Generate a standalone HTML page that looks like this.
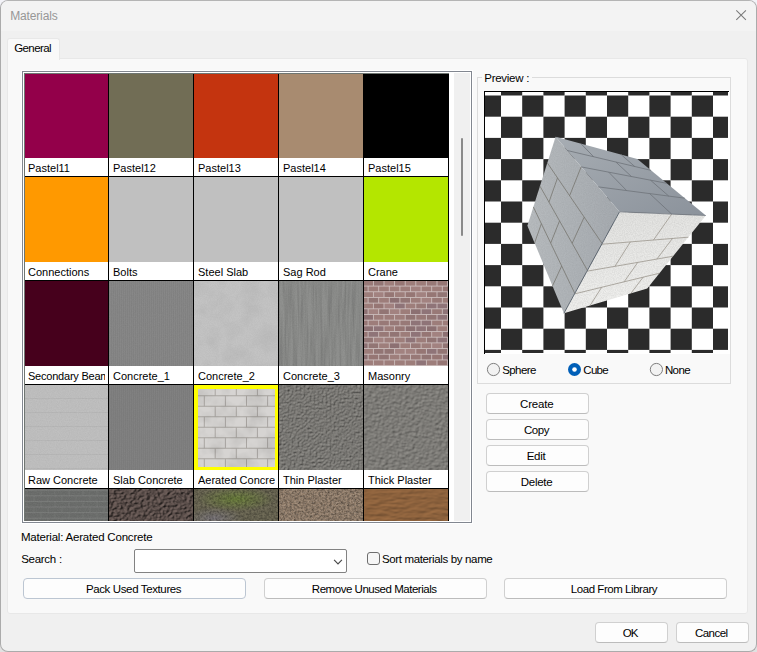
<!DOCTYPE html><html><head><meta charset="utf-8"><title>Materials</title><style>
*{box-sizing:border-box;margin:0;padding:0}
html,body{width:757px;height:652px;overflow:hidden;background:linear-gradient(180deg,#f3f3f8 0,#f3f3f8 50%,#e1e1e1 50%,#e1e1e1 100%);font-family:"Liberation Sans",sans-serif;}
#win{position:absolute;left:0;top:0;width:757px;height:652px;background:#f0f0f0;border:1px solid #ababab;border-top-color:#b4b4b4;border-radius:8px;overflow:hidden}
#root{position:absolute;left:-1px;top:-1px;width:757px;height:652px}
.a{position:absolute}
.t{position:absolute;white-space:nowrap;line-height:1;}
.btn{position:absolute;background:#fdfdfd;border:1px solid #d0d0d0;border-bottom-color:#bcbcbc;border-radius:4px}
.cell{position:absolute;width:84px;height:85px;overflow:hidden}
.lab{position:absolute;width:84px;height:18px;background:#fff;overflow:hidden}
.lab span{position:absolute;left:4px;top:5.2px;font-size:11px;line-height:1;white-space:nowrap;color:#000;width:77px;overflow:hidden;height:13px}
</style></head><body>
<div id="win"><div id="root">
<svg width="0" height="0" style="position:absolute"><defs>
<filter id="nz1" x="0" y="0" width="100%" height="100%"><feTurbulence type="fractalNoise" baseFrequency="0.9" numOctaves="2" seed="3"/><feColorMatrix type="matrix" values="0 0 0 0 0  0 0 0 0 0  0 0 0 0 0  1.2 0 0 0 -0.35"/></filter>
<filter id="nz2" x="0" y="0" width="100%" height="100%"><feTurbulence type="fractalNoise" baseFrequency="0.45" numOctaves="3" seed="8"/><feColorMatrix type="matrix" values="0 0 0 0 0  0 0 0 0 0  0 0 0 0 0  1.6 0 0 0 -0.5"/></filter>
<filter id="nzw" x="0" y="0" width="100%" height="100%"><feTurbulence type="fractalNoise" baseFrequency="0.9" numOctaves="2" seed="5"/><feColorMatrix type="matrix" values="0 0 0 0 1  0 0 0 0 1  0 0 0 0 1  1.2 0 0 0 -0.4"/></filter>
<filter id="vstreak" x="0" y="0" width="100%" height="100%"><feTurbulence type="fractalNoise" baseFrequency="0.5 0.02" numOctaves="2" seed="11"/><feColorMatrix type="matrix" values="0 0 0 0 0  0 0 0 0 0  0 0 0 0 0  1.5 0 0 0 -0.5"/></filter>
<filter id="blob" x="0" y="0" width="100%" height="100%"><feTurbulence type="fractalNoise" baseFrequency="0.06" numOctaves="3" seed="4"/><feColorMatrix type="matrix" values="0 0 0 0 0  0 0 0 0 0  0 0 0 0 0  1.6 0 0 0 -0.55"/></filter>
<filter id="plaster1" x="0" y="0" width="100%" height="100%" color-interpolation-filters="sRGB"><feTurbulence type="fractalNoise" baseFrequency="0.5" numOctaves="2" seed="2"/><feDiffuseLighting surfaceScale="1.0" diffuseConstant="1" lighting-color="#979590"><feDistantLight azimuth="235" elevation="55"/></feDiffuseLighting></filter>
<filter id="plaster2" x="0" y="0" width="100%" height="100%" color-interpolation-filters="sRGB"><feTurbulence type="fractalNoise" baseFrequency="0.3 0.38" numOctaves="3" seed="9"/><feDiffuseLighting surfaceScale="0.7" diffuseConstant="1" lighting-color="#989691"><feDistantLight azimuth="235" elevation="55"/></feDiffuseLighting></filter>
<filter id="soil" x="0" y="0" width="100%" height="100%" color-interpolation-filters="sRGB"><feTurbulence type="fractalNoise" baseFrequency="0.3 0.4" numOctaves="3" seed="5"/><feDiffuseLighting surfaceScale="1.8" diffuseConstant="1" lighting-color="#74645f"><feDistantLight azimuth="215" elevation="50"/></feDiffuseLighting></filter>
<filter id="sand" x="0" y="0" width="100%" height="100%" color-interpolation-filters="sRGB"><feTurbulence type="fractalNoise" baseFrequency="0.1 0.3" numOctaves="2" seed="12"/><feDiffuseLighting surfaceScale="0.5" diffuseConstant="1" lighting-color="#ab774a"><feDistantLight azimuth="235" elevation="55"/></feDiffuseLighting></filter>
</defs></svg>
<div class="a" style="left:0;top:0;width:757px;height:31px;background:#f3f3f3"></div>
<span class="t" style="left:10.15px;top:10.00px;font-size:12px;color:#979797;letter-spacing:-0.139px;">Materials</span>
<svg class="a" style="left:733px;top:7px" width="16" height="16" viewBox="0 0 16 16"><path d="M3.3 3.3 L12.9 12.9 M12.9 3.3 L3.3 12.9" stroke="#7a7a7a" stroke-width="1.05" fill="none"/></svg>
<div class="a" style="left:7px;top:58px;width:741px;height:556px;background:#f9f9f9;border:1px solid #e8e8e8;border-radius:0 3px 3px 3px"></div>
<div class="a" style="left:7px;top:38px;width:53px;height:22px;background:#f9f9f9;border:1px solid #e8e8e8;border-bottom:none;border-radius:3px 3px 0 0"></div>
<span class="t" style="left:14.27px;top:43.00px;font-size:11.5px;color:#000;letter-spacing:-0.616px;">General</span>
<div class="a" style="left:21px;top:70px;width:452px;height:454px;background:#fff"></div>
<div class="a" style="left:22px;top:71px;width:450px;height:452px;background:#fff;border:1px solid #828790"></div>
<div class="a" style="left:24px;top:73px;width:425px;height:448px;background:#000"></div>
<div class="a" style="left:454px;top:73px;width:16px;height:448px;background:#f0f0f0"></div>
<div class="a" style="left:461px;top:138px;width:2px;height:98px;background:#8a8a8a;border-radius:1px"></div>
<div class="cell" style="left:24px;top:73px;height:85px;"><div class="a" style="left:0;top:0;width:84px;height:85px;background:#93004a"></div></div>
<div class="lab" style="left:24px;top:158px"><span style="">Pastel11</span></div>
<div class="cell" style="left:109px;top:73px;height:85px;"><div class="a" style="left:0;top:0;width:84px;height:85px;background:#716d55"></div></div>
<div class="lab" style="left:109px;top:158px"><span style="">Pastel12</span></div>
<div class="cell" style="left:194px;top:73px;height:85px;"><div class="a" style="left:0;top:0;width:84px;height:85px;background:#c4340f"></div></div>
<div class="lab" style="left:194px;top:158px"><span style="">Pastel13</span></div>
<div class="cell" style="left:279px;top:73px;height:85px;"><div class="a" style="left:0;top:0;width:84px;height:85px;background:#a88b70"></div></div>
<div class="lab" style="left:279px;top:158px"><span style="">Pastel14</span></div>
<div class="cell" style="left:364px;top:73px;height:85px;"><div class="a" style="left:0;top:0;width:84px;height:85px;background:#000000"></div></div>
<div class="lab" style="left:364px;top:158px"><span style="">Pastel15</span></div>
<div class="cell" style="left:24px;top:177px;height:85px;"><div class="a" style="left:0;top:0;width:84px;height:85px;background:#ff9900"></div></div>
<div class="lab" style="left:24px;top:262px"><span style="">Connections</span></div>
<div class="cell" style="left:109px;top:177px;height:85px;"><div class="a" style="left:0;top:0;width:84px;height:85px;background:#c0c0c0"></div></div>
<div class="lab" style="left:109px;top:262px"><span style="">Bolts</span></div>
<div class="cell" style="left:194px;top:177px;height:85px;"><div class="a" style="left:0;top:0;width:84px;height:85px;background:#c0c0c0"></div></div>
<div class="lab" style="left:194px;top:262px"><span style="">Steel Slab</span></div>
<div class="cell" style="left:279px;top:177px;height:85px;"><div class="a" style="left:0;top:0;width:84px;height:85px;background:#c0c0c0"></div></div>
<div class="lab" style="left:279px;top:262px"><span style="">Sag Rod</span></div>
<div class="cell" style="left:364px;top:177px;height:85px;"><div class="a" style="left:0;top:0;width:84px;height:85px;background:#b4e600"></div></div>
<div class="lab" style="left:364px;top:262px"><span style="">Crane</span></div>
<div class="cell" style="left:24px;top:281px;height:85px;"><div class="a" style="left:0;top:0;width:84px;height:85px;background:#46001c"></div></div>
<div class="lab" style="left:24px;top:366px"><span style="letter-spacing:-0.22px">Secondary Beam</span></div>
<div class="cell" style="left:109px;top:281px;height:85px;"><div class="a" style="left:0;top:0;width:84px;height:85px;background:#868686"></div><div class="a" style="left:0;top:0;width:84px;height:85px;background:repeating-linear-gradient(90deg,rgba(0,0,0,0.02) 0 1px,rgba(255,255,255,0.02) 1px 2px)"></div><svg class="a" style="left:0;top:0;opacity:0.05;" width="84" height="85"><rect width="84" height="85" filter="url(#nz1)"/></svg></div>
<div class="lab" style="left:109px;top:366px"><span style="">Concrete_1</span></div>
<div class="cell" style="left:194px;top:281px;height:85px;"><div class="a" style="left:0;top:0;width:84px;height:85px;background:#c3c3c3"></div><svg class="a" style="left:0;top:0;opacity:0.045;" width="84" height="85"><rect width="84" height="85" filter="url(#blob)"/></svg><svg class="a" style="left:0;top:0;opacity:0.04;" width="84" height="85"><rect width="84" height="85" filter="url(#nz1)"/></svg></div>
<div class="lab" style="left:194px;top:366px"><span style="">Concrete_2</span></div>
<div class="cell" style="left:279px;top:281px;height:85px;"><div class="a" style="left:0;top:0;width:84px;height:85px;background:#90918f"></div><svg class="a" style="left:0;top:0;opacity:0.16;" width="84" height="85"><rect width="84" height="85" filter="url(#vstreak)"/></svg><svg class="a" style="left:0;top:0;opacity:0.07;" width="84" height="85"><rect width="84" height="85" filter="url(#nz1)"/></svg></div>
<div class="lab" style="left:279px;top:366px"><span style="">Concrete_3</span></div>
<div class="cell" style="left:364px;top:281px;height:85px;"><svg class="a" style="left:0;top:0" width="84" height="85"><rect width="84" height="85" fill="#cbbcbb"/><rect x="-0.75" y="-0.15" width="9.70" height="4.78" fill="#987977"/><rect x="9.85" y="-0.15" width="9.70" height="4.78" fill="#927574"/><rect x="20.45" y="-0.15" width="9.70" height="4.78" fill="#9e7e7b"/><rect x="31.05" y="-0.15" width="9.70" height="4.78" fill="#967674"/><rect x="41.65" y="-0.15" width="9.70" height="4.78" fill="#9d7d7a"/><rect x="52.25" y="-0.15" width="9.70" height="4.78" fill="#9d7d7a"/><rect x="62.85" y="-0.15" width="9.70" height="4.78" fill="#987977"/><rect x="73.45" y="-0.15" width="9.70" height="4.78" fill="#967674"/><rect x="84.05" y="-0.15" width="9.70" height="4.78" fill="#a28280"/><rect x="-6.05" y="5.53" width="9.70" height="4.78" fill="#967674"/><rect x="4.55" y="5.53" width="9.70" height="4.78" fill="#9d7d7a"/><rect x="15.15" y="5.53" width="9.70" height="4.78" fill="#9e7e7b"/><rect x="25.75" y="5.53" width="9.70" height="4.78" fill="#9e7e7b"/><rect x="36.35" y="5.53" width="9.70" height="4.78" fill="#9d7d7a"/><rect x="46.95" y="5.53" width="9.70" height="4.78" fill="#a28280"/><rect x="57.55" y="5.53" width="9.70" height="4.78" fill="#9d7d7a"/><rect x="68.15" y="5.53" width="9.70" height="4.78" fill="#9e7e7b"/><rect x="78.75" y="5.53" width="9.70" height="4.78" fill="#967674"/><rect x="-0.75" y="11.21" width="9.70" height="4.78" fill="#9d7d7a"/><rect x="9.85" y="11.21" width="9.70" height="4.78" fill="#a28280"/><rect x="20.45" y="11.21" width="9.70" height="4.78" fill="#967674"/><rect x="31.05" y="11.21" width="9.70" height="4.78" fill="#9e7e7b"/><rect x="41.65" y="11.21" width="9.70" height="4.78" fill="#967674"/><rect x="52.25" y="11.21" width="9.70" height="4.78" fill="#a28280"/><rect x="62.85" y="11.21" width="9.70" height="4.78" fill="#967674"/><rect x="73.45" y="11.21" width="9.70" height="4.78" fill="#927574"/><rect x="84.05" y="11.21" width="9.70" height="4.78" fill="#8c7072"/><rect x="-6.05" y="16.89" width="9.70" height="4.78" fill="#9e7e7b"/><rect x="4.55" y="16.89" width="9.70" height="4.78" fill="#927574"/><rect x="15.15" y="16.89" width="9.70" height="4.78" fill="#9d7d7a"/><rect x="25.75" y="16.89" width="9.70" height="4.78" fill="#8c7072"/><rect x="36.35" y="16.89" width="9.70" height="4.78" fill="#927574"/><rect x="46.95" y="16.89" width="9.70" height="4.78" fill="#9d7d7a"/><rect x="57.55" y="16.89" width="9.70" height="4.78" fill="#a28280"/><rect x="68.15" y="16.89" width="9.70" height="4.78" fill="#987977"/><rect x="78.75" y="16.89" width="9.70" height="4.78" fill="#9d7d7a"/><rect x="-0.75" y="22.57" width="9.70" height="4.78" fill="#9d7d7a"/><rect x="9.85" y="22.57" width="9.70" height="4.78" fill="#967674"/><rect x="20.45" y="22.57" width="9.70" height="4.78" fill="#a28280"/><rect x="31.05" y="22.57" width="9.70" height="4.78" fill="#8f7478"/><rect x="41.65" y="22.57" width="9.70" height="4.78" fill="#9e7e7b"/><rect x="52.25" y="22.57" width="9.70" height="4.78" fill="#987977"/><rect x="62.85" y="22.57" width="9.70" height="4.78" fill="#8f7478"/><rect x="73.45" y="22.57" width="9.70" height="4.78" fill="#8f7478"/><rect x="84.05" y="22.57" width="9.70" height="4.78" fill="#987977"/><rect x="-6.05" y="28.25" width="9.70" height="4.78" fill="#8c7072"/><rect x="4.55" y="28.25" width="9.70" height="4.78" fill="#a28280"/><rect x="15.15" y="28.25" width="9.70" height="4.78" fill="#927574"/><rect x="25.75" y="28.25" width="9.70" height="4.78" fill="#a28280"/><rect x="36.35" y="28.25" width="9.70" height="4.78" fill="#9d7d7a"/><rect x="46.95" y="28.25" width="9.70" height="4.78" fill="#8c7072"/><rect x="57.55" y="28.25" width="9.70" height="4.78" fill="#8f7478"/><rect x="68.15" y="28.25" width="9.70" height="4.78" fill="#987977"/><rect x="78.75" y="28.25" width="9.70" height="4.78" fill="#8f7478"/><rect x="-0.75" y="33.93" width="9.70" height="4.78" fill="#8c7072"/><rect x="9.85" y="33.93" width="9.70" height="4.78" fill="#9d7d7a"/><rect x="20.45" y="33.93" width="9.70" height="4.78" fill="#9d7d7a"/><rect x="31.05" y="33.93" width="9.70" height="4.78" fill="#9e7e7b"/><rect x="41.65" y="33.93" width="9.70" height="4.78" fill="#927574"/><rect x="52.25" y="33.93" width="9.70" height="4.78" fill="#987977"/><rect x="62.85" y="33.93" width="9.70" height="4.78" fill="#927574"/><rect x="73.45" y="33.93" width="9.70" height="4.78" fill="#8f7478"/><rect x="84.05" y="33.93" width="9.70" height="4.78" fill="#9e7e7b"/><rect x="-6.05" y="39.61" width="9.70" height="4.78" fill="#967674"/><rect x="4.55" y="39.61" width="9.70" height="4.78" fill="#9d7d7a"/><rect x="15.15" y="39.61" width="9.70" height="4.78" fill="#987977"/><rect x="25.75" y="39.61" width="9.70" height="4.78" fill="#987977"/><rect x="36.35" y="39.61" width="9.70" height="4.78" fill="#987977"/><rect x="46.95" y="39.61" width="9.70" height="4.78" fill="#8f7478"/><rect x="57.55" y="39.61" width="9.70" height="4.78" fill="#8f7478"/><rect x="68.15" y="39.61" width="9.70" height="4.78" fill="#9d7d7a"/><rect x="78.75" y="39.61" width="9.70" height="4.78" fill="#9d7d7a"/><rect x="-0.75" y="45.29" width="9.70" height="4.78" fill="#8c7072"/><rect x="9.85" y="45.29" width="9.70" height="4.78" fill="#8f7478"/><rect x="20.45" y="45.29" width="9.70" height="4.78" fill="#9d7d7a"/><rect x="31.05" y="45.29" width="9.70" height="4.78" fill="#967674"/><rect x="41.65" y="45.29" width="9.70" height="4.78" fill="#8c7072"/><rect x="52.25" y="45.29" width="9.70" height="4.78" fill="#8f7478"/><rect x="62.85" y="45.29" width="9.70" height="4.78" fill="#8c7072"/><rect x="73.45" y="45.29" width="9.70" height="4.78" fill="#9e7e7b"/><rect x="84.05" y="45.29" width="9.70" height="4.78" fill="#987977"/><rect x="-6.05" y="50.97" width="9.70" height="4.78" fill="#967674"/><rect x="4.55" y="50.97" width="9.70" height="4.78" fill="#8f7478"/><rect x="15.15" y="50.97" width="9.70" height="4.78" fill="#987977"/><rect x="25.75" y="50.97" width="9.70" height="4.78" fill="#927574"/><rect x="36.35" y="50.97" width="9.70" height="4.78" fill="#9d7d7a"/><rect x="46.95" y="50.97" width="9.70" height="4.78" fill="#8f7478"/><rect x="57.55" y="50.97" width="9.70" height="4.78" fill="#967674"/><rect x="68.15" y="50.97" width="9.70" height="4.78" fill="#a28280"/><rect x="78.75" y="50.97" width="9.70" height="4.78" fill="#8c7072"/><rect x="-0.75" y="56.65" width="9.70" height="4.78" fill="#927574"/><rect x="9.85" y="56.65" width="9.70" height="4.78" fill="#a28280"/><rect x="20.45" y="56.65" width="9.70" height="4.78" fill="#9e7e7b"/><rect x="31.05" y="56.65" width="9.70" height="4.78" fill="#9e7e7b"/><rect x="41.65" y="56.65" width="9.70" height="4.78" fill="#8f7478"/><rect x="52.25" y="56.65" width="9.70" height="4.78" fill="#9d7d7a"/><rect x="62.85" y="56.65" width="9.70" height="4.78" fill="#927574"/><rect x="73.45" y="56.65" width="9.70" height="4.78" fill="#8f7478"/><rect x="84.05" y="56.65" width="9.70" height="4.78" fill="#9e7e7b"/><rect x="-6.05" y="62.33" width="9.70" height="4.78" fill="#8c7072"/><rect x="4.55" y="62.33" width="9.70" height="4.78" fill="#927574"/><rect x="15.15" y="62.33" width="9.70" height="4.78" fill="#9e7e7b"/><rect x="25.75" y="62.33" width="9.70" height="4.78" fill="#8c7072"/><rect x="36.35" y="62.33" width="9.70" height="4.78" fill="#9e7e7b"/><rect x="46.95" y="62.33" width="9.70" height="4.78" fill="#987977"/><rect x="57.55" y="62.33" width="9.70" height="4.78" fill="#9e7e7b"/><rect x="68.15" y="62.33" width="9.70" height="4.78" fill="#a28280"/><rect x="78.75" y="62.33" width="9.70" height="4.78" fill="#927574"/><rect x="-0.75" y="68.01" width="9.70" height="4.78" fill="#9d7d7a"/><rect x="9.85" y="68.01" width="9.70" height="4.78" fill="#927574"/><rect x="20.45" y="68.01" width="9.70" height="4.78" fill="#927574"/><rect x="31.05" y="68.01" width="9.70" height="4.78" fill="#a28280"/><rect x="41.65" y="68.01" width="9.70" height="4.78" fill="#a28280"/><rect x="52.25" y="68.01" width="9.70" height="4.78" fill="#967674"/><rect x="62.85" y="68.01" width="9.70" height="4.78" fill="#8f7478"/><rect x="73.45" y="68.01" width="9.70" height="4.78" fill="#927574"/><rect x="84.05" y="68.01" width="9.70" height="4.78" fill="#8c7072"/><rect x="-6.05" y="73.69" width="9.70" height="4.78" fill="#8c7072"/><rect x="4.55" y="73.69" width="9.70" height="4.78" fill="#967674"/><rect x="15.15" y="73.69" width="9.70" height="4.78" fill="#927574"/><rect x="25.75" y="73.69" width="9.70" height="4.78" fill="#9e7e7b"/><rect x="36.35" y="73.69" width="9.70" height="4.78" fill="#987977"/><rect x="46.95" y="73.69" width="9.70" height="4.78" fill="#987977"/><rect x="57.55" y="73.69" width="9.70" height="4.78" fill="#927574"/><rect x="68.15" y="73.69" width="9.70" height="4.78" fill="#967674"/><rect x="78.75" y="73.69" width="9.70" height="4.78" fill="#8f7478"/><rect x="-0.75" y="79.37" width="9.70" height="4.78" fill="#9e7e7b"/><rect x="9.85" y="79.37" width="9.70" height="4.78" fill="#9e7e7b"/><rect x="20.45" y="79.37" width="9.70" height="4.78" fill="#9e7e7b"/><rect x="31.05" y="79.37" width="9.70" height="4.78" fill="#9e7e7b"/><rect x="41.65" y="79.37" width="9.70" height="4.78" fill="#9d7d7a"/><rect x="52.25" y="79.37" width="9.70" height="4.78" fill="#8f7478"/><rect x="62.85" y="79.37" width="9.70" height="4.78" fill="#9e7e7b"/><rect x="73.45" y="79.37" width="9.70" height="4.78" fill="#967674"/><rect x="84.05" y="79.37" width="9.70" height="4.78" fill="#a28280"/><rect x="-6.05" y="85.05" width="9.70" height="4.78" fill="#9d7d7a"/><rect x="4.55" y="85.05" width="9.70" height="4.78" fill="#a28280"/><rect x="15.15" y="85.05" width="9.70" height="4.78" fill="#8f7478"/><rect x="25.75" y="85.05" width="9.70" height="4.78" fill="#927574"/><rect x="36.35" y="85.05" width="9.70" height="4.78" fill="#9d7d7a"/><rect x="46.95" y="85.05" width="9.70" height="4.78" fill="#987977"/><rect x="57.55" y="85.05" width="9.70" height="4.78" fill="#967674"/><rect x="68.15" y="85.05" width="9.70" height="4.78" fill="#9d7d7a"/><rect x="78.75" y="85.05" width="9.70" height="4.78" fill="#967674"/></svg></div>
<div class="lab" style="left:364px;top:366px"><span style="">Masonry</span></div>
<div class="cell" style="left:24px;top:385px;height:85px;"><div class="a" style="left:0;top:0;width:84px;height:85px;background:#bfbfbf"></div><div class="a" style="left:0;top:0;width:84px;height:85px;background:repeating-linear-gradient(180deg,rgba(0,0,0,0) 0 13px,rgba(0,0,0,0.045) 13px 14px)"></div><svg class="a" style="left:0;top:0;opacity:0.05;" width="84" height="85"><rect width="84" height="85" filter="url(#nz1)"/></svg></div>
<div class="lab" style="left:24px;top:470px"><span style="">Raw Concrete</span></div>
<div class="cell" style="left:109px;top:385px;height:85px;"><div class="a" style="left:0;top:0;width:84px;height:85px;background:#7f7f7f"></div><div class="a" style="left:0;top:0;width:84px;height:85px;background:repeating-linear-gradient(90deg,rgba(0,0,0,0.02) 0 1px,rgba(255,255,255,0.02) 1px 2px)"></div><svg class="a" style="left:0;top:0;opacity:0.04;" width="84" height="85"><rect width="84" height="85" filter="url(#nz1)"/></svg></div>
<div class="lab" style="left:109px;top:470px"><span style="">Slab Concrete</span></div>
<div class="cell" style="left:194px;top:385px;height:85px;"><div class="a" style="left:0;top:0;width:84px;height:85px;background:#ffff00"></div><svg class="a" style="left:4px;top:4px" width="77" height="78"><rect width="77" height="78" fill="#d6d4d2"/><rect x="0" y="6.25" width="77" height="1" fill="#a9a5a1"/><rect x="0" y="16.75" width="77" height="1" fill="#a9a5a1"/><rect x="0" y="27.25" width="77" height="1" fill="#a9a5a1"/><rect x="0" y="37.75" width="77" height="1" fill="#a9a5a1"/><rect x="0" y="48.25" width="77" height="1" fill="#a9a5a1"/><rect x="0" y="58.75" width="77" height="1" fill="#a9a5a1"/><rect x="0" y="69.25" width="77" height="1" fill="#a9a5a1"/><rect x="0" y="79.75" width="77" height="1" fill="#a9a5a1"/><rect x="16.70" y="0.00" width="1" height="6.75" fill="#aaa6a2"/><rect x="37.80" y="0.00" width="1" height="6.75" fill="#aaa6a2"/><rect x="58.90" y="0.00" width="1" height="6.75" fill="#aaa6a2"/><rect x="80.00" y="0.00" width="1" height="6.75" fill="#aaa6a2"/><rect x="5.80" y="6.75" width="1" height="10.50" fill="#aaa6a2"/><rect x="26.90" y="6.75" width="1" height="10.50" fill="#aaa6a2"/><rect x="48.00" y="6.75" width="1" height="10.50" fill="#aaa6a2"/><rect x="69.10" y="6.75" width="1" height="10.50" fill="#aaa6a2"/><rect x="16.70" y="17.25" width="1" height="10.50" fill="#aaa6a2"/><rect x="37.80" y="17.25" width="1" height="10.50" fill="#aaa6a2"/><rect x="58.90" y="17.25" width="1" height="10.50" fill="#aaa6a2"/><rect x="80.00" y="17.25" width="1" height="10.50" fill="#aaa6a2"/><rect x="5.80" y="27.75" width="1" height="10.50" fill="#aaa6a2"/><rect x="26.90" y="27.75" width="1" height="10.50" fill="#aaa6a2"/><rect x="48.00" y="27.75" width="1" height="10.50" fill="#aaa6a2"/><rect x="69.10" y="27.75" width="1" height="10.50" fill="#aaa6a2"/><rect x="16.70" y="38.25" width="1" height="10.50" fill="#aaa6a2"/><rect x="37.80" y="38.25" width="1" height="10.50" fill="#aaa6a2"/><rect x="58.90" y="38.25" width="1" height="10.50" fill="#aaa6a2"/><rect x="80.00" y="38.25" width="1" height="10.50" fill="#aaa6a2"/><rect x="5.80" y="48.75" width="1" height="10.50" fill="#aaa6a2"/><rect x="26.90" y="48.75" width="1" height="10.50" fill="#aaa6a2"/><rect x="48.00" y="48.75" width="1" height="10.50" fill="#aaa6a2"/><rect x="69.10" y="48.75" width="1" height="10.50" fill="#aaa6a2"/><rect x="16.70" y="59.25" width="1" height="10.50" fill="#aaa6a2"/><rect x="37.80" y="59.25" width="1" height="10.50" fill="#aaa6a2"/><rect x="58.90" y="59.25" width="1" height="10.50" fill="#aaa6a2"/><rect x="80.00" y="59.25" width="1" height="10.50" fill="#aaa6a2"/><rect x="5.80" y="69.75" width="1" height="10.50" fill="#aaa6a2"/><rect x="26.90" y="69.75" width="1" height="10.50" fill="#aaa6a2"/><rect x="48.00" y="69.75" width="1" height="10.50" fill="#aaa6a2"/><rect x="69.10" y="69.75" width="1" height="10.50" fill="#aaa6a2"/><rect x="16.70" y="80.25" width="1" height="-2.25" fill="#aaa6a2"/><rect x="37.80" y="80.25" width="1" height="-2.25" fill="#aaa6a2"/><rect x="58.90" y="80.25" width="1" height="-2.25" fill="#aaa6a2"/><rect x="80.00" y="80.25" width="1" height="-2.25" fill="#aaa6a2"/><rect width="77" height="78" filter="url(#blob)" opacity="0.10"/></svg></div>
<div class="lab" style="left:194px;top:470px"><span style="">Aerated Concret</span></div>
<div class="cell" style="left:279px;top:385px;height:85px;"><div class="a" style="left:0;top:0;width:84px;height:85px;background:#7f7d78"></div><svg class="a" style="left:0;top:0;opacity:1.0;" width="84" height="85"><rect width="84" height="85" filter="url(#plaster1)"/></svg><svg class="a" style="left:0;top:0;opacity:0.1;" width="84" height="85"><rect width="84" height="85" filter="url(#nz1)"/></svg></div>
<div class="lab" style="left:279px;top:470px"><span style="">Thin Plaster</span></div>
<div class="cell" style="left:364px;top:385px;height:85px;"><div class="a" style="left:0;top:0;width:84px;height:85px;background:#807e79"></div><svg class="a" style="left:0;top:0;opacity:1.0;" width="84" height="85"><rect width="84" height="85" filter="url(#plaster2)"/></svg></div>
<div class="lab" style="left:364px;top:470px"><span style="">Thick Plaster</span></div>
<div class="cell" style="left:24px;top:489px;height:32px;"><svg class="a" style="left:0;top:0" width="84" height="32"><rect width="84" height="32" fill="#6d6f6d"/><rect x="0" y="0.70" width="84" height="1" fill="#8b8d8b" opacity="0.55"/><rect x="2.50" y="1.20" width="1" height="5.60" fill="#858785" opacity="0.4"/><rect x="16.50" y="1.20" width="1" height="5.60" fill="#858785" opacity="0.4"/><rect x="30.50" y="1.20" width="1" height="5.60" fill="#858785" opacity="0.4"/><rect x="44.50" y="1.20" width="1" height="5.60" fill="#858785" opacity="0.4"/><rect x="58.50" y="1.20" width="1" height="5.60" fill="#858785" opacity="0.4"/><rect x="72.50" y="1.20" width="1" height="5.60" fill="#858785" opacity="0.4"/><rect x="0" y="6.30" width="84" height="1" fill="#8b8d8b" opacity="0.55"/><rect x="9.50" y="6.80" width="1" height="5.60" fill="#858785" opacity="0.4"/><rect x="23.50" y="6.80" width="1" height="5.60" fill="#858785" opacity="0.4"/><rect x="37.50" y="6.80" width="1" height="5.60" fill="#858785" opacity="0.4"/><rect x="51.50" y="6.80" width="1" height="5.60" fill="#858785" opacity="0.4"/><rect x="65.50" y="6.80" width="1" height="5.60" fill="#858785" opacity="0.4"/><rect x="79.50" y="6.80" width="1" height="5.60" fill="#858785" opacity="0.4"/><rect x="0" y="11.90" width="84" height="1" fill="#8b8d8b" opacity="0.55"/><rect x="2.50" y="12.40" width="1" height="5.60" fill="#858785" opacity="0.4"/><rect x="16.50" y="12.40" width="1" height="5.60" fill="#858785" opacity="0.4"/><rect x="30.50" y="12.40" width="1" height="5.60" fill="#858785" opacity="0.4"/><rect x="44.50" y="12.40" width="1" height="5.60" fill="#858785" opacity="0.4"/><rect x="58.50" y="12.40" width="1" height="5.60" fill="#858785" opacity="0.4"/><rect x="72.50" y="12.40" width="1" height="5.60" fill="#858785" opacity="0.4"/><rect x="0" y="17.50" width="84" height="1" fill="#8b8d8b" opacity="0.55"/><rect x="9.50" y="18.00" width="1" height="5.60" fill="#858785" opacity="0.4"/><rect x="23.50" y="18.00" width="1" height="5.60" fill="#858785" opacity="0.4"/><rect x="37.50" y="18.00" width="1" height="5.60" fill="#858785" opacity="0.4"/><rect x="51.50" y="18.00" width="1" height="5.60" fill="#858785" opacity="0.4"/><rect x="65.50" y="18.00" width="1" height="5.60" fill="#858785" opacity="0.4"/><rect x="79.50" y="18.00" width="1" height="5.60" fill="#858785" opacity="0.4"/><rect x="0" y="23.10" width="84" height="1" fill="#8b8d8b" opacity="0.55"/><rect x="2.50" y="23.60" width="1" height="5.60" fill="#858785" opacity="0.4"/><rect x="16.50" y="23.60" width="1" height="5.60" fill="#858785" opacity="0.4"/><rect x="30.50" y="23.60" width="1" height="5.60" fill="#858785" opacity="0.4"/><rect x="44.50" y="23.60" width="1" height="5.60" fill="#858785" opacity="0.4"/><rect x="58.50" y="23.60" width="1" height="5.60" fill="#858785" opacity="0.4"/><rect x="72.50" y="23.60" width="1" height="5.60" fill="#858785" opacity="0.4"/><rect x="0" y="28.70" width="84" height="1" fill="#8b8d8b" opacity="0.55"/><rect x="9.50" y="29.20" width="1" height="5.60" fill="#858785" opacity="0.4"/><rect x="23.50" y="29.20" width="1" height="5.60" fill="#858785" opacity="0.4"/><rect x="37.50" y="29.20" width="1" height="5.60" fill="#858785" opacity="0.4"/><rect x="51.50" y="29.20" width="1" height="5.60" fill="#858785" opacity="0.4"/><rect x="65.50" y="29.20" width="1" height="5.60" fill="#858785" opacity="0.4"/><rect x="79.50" y="29.20" width="1" height="5.60" fill="#858785" opacity="0.4"/></svg><svg class="a" style="left:0;top:0;opacity:0.1;" width="84" height="85"><rect width="84" height="85" filter="url(#nz1)"/></svg></div>
<div class="cell" style="left:109px;top:489px;height:32px;"><div class="a" style="left:0;top:0;width:84px;height:85px;background:#6a5e5a"></div><svg class="a" style="left:0;top:0;opacity:1.0;" width="84" height="85"><rect width="84" height="85" filter="url(#soil)"/></svg></div>
<div class="cell" style="left:194px;top:489px;height:32px;"><div class="a" style="left:0;top:0;width:84px;height:85px;background:#6f6b57"></div><div class="a" style="left:4px;top:-2px;width:76px;height:24px;background:radial-gradient(ellipse at center,rgba(112,134,62,0.95),rgba(112,134,62,0) 72%)"></div><div class="a" style="left:0;top:18px;width:50px;height:14px;background:radial-gradient(ellipse at 40% 80%,rgba(130,125,135,0.8),rgba(130,125,135,0) 70%)"></div><svg class="a" style="left:0;top:0;opacity:0.4;" width="84" height="85"><rect width="84" height="85" filter="url(#nz2)"/></svg></div>
<div class="cell" style="left:279px;top:489px;height:32px;"><div class="a" style="left:0;top:0;width:84px;height:85px;background:#98836f"></div><svg class="a" style="left:0;top:0;opacity:0.5;" width="84" height="85"><rect width="84" height="85" filter="url(#nz2)"/></svg><svg class="a" style="left:0;top:0;opacity:0.22;" width="84" height="85"><rect width="84" height="85" filter="url(#nzw)"/></svg></div>
<div class="cell" style="left:364px;top:489px;height:32px;"><div class="a" style="left:0;top:0;width:84px;height:85px;background:#8a5f37"></div><svg class="a" style="left:0;top:0;opacity:1.0;" width="84" height="85"><rect width="84" height="85" filter="url(#sand)"/></svg></div>
<div class="a" style="left:24px;top:73px;width:1px;height:448px;background:#6f7672"></div>
<div class="a" style="left:24px;top:73px;width:425px;height:1px;background:#6f7672"></div>
<div class="a" style="left:477px;top:77px;width:254px;height:307px;border:1px solid #dcdcdc"></div>
<div class="a" style="left:482px;top:72px;width:50px;height:12px;background:#f9f9f9"></div>
<span class="t" style="left:484.23px;top:73.00px;font-size:11.5px;color:#000;letter-spacing:-0.259px;">Preview :</span>
<svg class="a" style="left:484px;top:91px" width="246" height="263" viewBox="484 91 246 263"><rect x="484" y="91" width="246" height="263" fill="#fff"/><rect x="501.00" y="92.00" width="21.20" height="3.50" fill="#2b2b2b"/><rect x="543.40" y="92.00" width="21.20" height="3.50" fill="#2b2b2b"/><rect x="585.80" y="92.00" width="21.20" height="3.50" fill="#2b2b2b"/><rect x="628.20" y="92.00" width="21.20" height="3.50" fill="#2b2b2b"/><rect x="670.60" y="92.00" width="21.20" height="3.50" fill="#2b2b2b"/><rect x="713.00" y="92.00" width="15.00" height="3.50" fill="#2b2b2b"/><rect x="485.00" y="95.50" width="16.00" height="21.20" fill="#2b2b2b"/><rect x="522.20" y="95.50" width="21.20" height="21.20" fill="#2b2b2b"/><rect x="564.60" y="95.50" width="21.20" height="21.20" fill="#2b2b2b"/><rect x="607.00" y="95.50" width="21.20" height="21.20" fill="#2b2b2b"/><rect x="649.40" y="95.50" width="21.20" height="21.20" fill="#2b2b2b"/><rect x="691.80" y="95.50" width="21.20" height="21.20" fill="#2b2b2b"/><rect x="501.00" y="116.70" width="21.20" height="21.20" fill="#2b2b2b"/><rect x="543.40" y="116.70" width="21.20" height="21.20" fill="#2b2b2b"/><rect x="585.80" y="116.70" width="21.20" height="21.20" fill="#2b2b2b"/><rect x="628.20" y="116.70" width="21.20" height="21.20" fill="#2b2b2b"/><rect x="670.60" y="116.70" width="21.20" height="21.20" fill="#2b2b2b"/><rect x="713.00" y="116.70" width="15.00" height="21.20" fill="#2b2b2b"/><rect x="485.00" y="137.90" width="16.00" height="21.20" fill="#2b2b2b"/><rect x="522.20" y="137.90" width="21.20" height="21.20" fill="#2b2b2b"/><rect x="564.60" y="137.90" width="21.20" height="21.20" fill="#2b2b2b"/><rect x="607.00" y="137.90" width="21.20" height="21.20" fill="#2b2b2b"/><rect x="649.40" y="137.90" width="21.20" height="21.20" fill="#2b2b2b"/><rect x="691.80" y="137.90" width="21.20" height="21.20" fill="#2b2b2b"/><rect x="501.00" y="159.10" width="21.20" height="21.20" fill="#2b2b2b"/><rect x="543.40" y="159.10" width="21.20" height="21.20" fill="#2b2b2b"/><rect x="585.80" y="159.10" width="21.20" height="21.20" fill="#2b2b2b"/><rect x="628.20" y="159.10" width="21.20" height="21.20" fill="#2b2b2b"/><rect x="670.60" y="159.10" width="21.20" height="21.20" fill="#2b2b2b"/><rect x="713.00" y="159.10" width="15.00" height="21.20" fill="#2b2b2b"/><rect x="485.00" y="180.30" width="16.00" height="21.20" fill="#2b2b2b"/><rect x="522.20" y="180.30" width="21.20" height="21.20" fill="#2b2b2b"/><rect x="564.60" y="180.30" width="21.20" height="21.20" fill="#2b2b2b"/><rect x="607.00" y="180.30" width="21.20" height="21.20" fill="#2b2b2b"/><rect x="649.40" y="180.30" width="21.20" height="21.20" fill="#2b2b2b"/><rect x="691.80" y="180.30" width="21.20" height="21.20" fill="#2b2b2b"/><rect x="501.00" y="201.50" width="21.20" height="21.20" fill="#2b2b2b"/><rect x="543.40" y="201.50" width="21.20" height="21.20" fill="#2b2b2b"/><rect x="585.80" y="201.50" width="21.20" height="21.20" fill="#2b2b2b"/><rect x="628.20" y="201.50" width="21.20" height="21.20" fill="#2b2b2b"/><rect x="670.60" y="201.50" width="21.20" height="21.20" fill="#2b2b2b"/><rect x="713.00" y="201.50" width="15.00" height="21.20" fill="#2b2b2b"/><rect x="485.00" y="222.70" width="16.00" height="21.20" fill="#2b2b2b"/><rect x="522.20" y="222.70" width="21.20" height="21.20" fill="#2b2b2b"/><rect x="564.60" y="222.70" width="21.20" height="21.20" fill="#2b2b2b"/><rect x="607.00" y="222.70" width="21.20" height="21.20" fill="#2b2b2b"/><rect x="649.40" y="222.70" width="21.20" height="21.20" fill="#2b2b2b"/><rect x="691.80" y="222.70" width="21.20" height="21.20" fill="#2b2b2b"/><rect x="501.00" y="243.90" width="21.20" height="21.20" fill="#2b2b2b"/><rect x="543.40" y="243.90" width="21.20" height="21.20" fill="#2b2b2b"/><rect x="585.80" y="243.90" width="21.20" height="21.20" fill="#2b2b2b"/><rect x="628.20" y="243.90" width="21.20" height="21.20" fill="#2b2b2b"/><rect x="670.60" y="243.90" width="21.20" height="21.20" fill="#2b2b2b"/><rect x="713.00" y="243.90" width="15.00" height="21.20" fill="#2b2b2b"/><rect x="485.00" y="265.10" width="16.00" height="21.20" fill="#2b2b2b"/><rect x="522.20" y="265.10" width="21.20" height="21.20" fill="#2b2b2b"/><rect x="564.60" y="265.10" width="21.20" height="21.20" fill="#2b2b2b"/><rect x="607.00" y="265.10" width="21.20" height="21.20" fill="#2b2b2b"/><rect x="649.40" y="265.10" width="21.20" height="21.20" fill="#2b2b2b"/><rect x="691.80" y="265.10" width="21.20" height="21.20" fill="#2b2b2b"/><rect x="501.00" y="286.30" width="21.20" height="21.20" fill="#2b2b2b"/><rect x="543.40" y="286.30" width="21.20" height="21.20" fill="#2b2b2b"/><rect x="585.80" y="286.30" width="21.20" height="21.20" fill="#2b2b2b"/><rect x="628.20" y="286.30" width="21.20" height="21.20" fill="#2b2b2b"/><rect x="670.60" y="286.30" width="21.20" height="21.20" fill="#2b2b2b"/><rect x="713.00" y="286.30" width="15.00" height="21.20" fill="#2b2b2b"/><rect x="485.00" y="307.50" width="16.00" height="21.20" fill="#2b2b2b"/><rect x="522.20" y="307.50" width="21.20" height="21.20" fill="#2b2b2b"/><rect x="564.60" y="307.50" width="21.20" height="21.20" fill="#2b2b2b"/><rect x="607.00" y="307.50" width="21.20" height="21.20" fill="#2b2b2b"/><rect x="649.40" y="307.50" width="21.20" height="21.20" fill="#2b2b2b"/><rect x="691.80" y="307.50" width="21.20" height="21.20" fill="#2b2b2b"/><rect x="501.00" y="328.70" width="21.20" height="21.20" fill="#2b2b2b"/><rect x="543.40" y="328.70" width="21.20" height="21.20" fill="#2b2b2b"/><rect x="585.80" y="328.70" width="21.20" height="21.20" fill="#2b2b2b"/><rect x="628.20" y="328.70" width="21.20" height="21.20" fill="#2b2b2b"/><rect x="670.60" y="328.70" width="21.20" height="21.20" fill="#2b2b2b"/><rect x="713.00" y="328.70" width="15.00" height="21.20" fill="#2b2b2b"/><rect x="485.00" y="349.90" width="16.00" height="3.10" fill="#2b2b2b"/><rect x="522.20" y="349.90" width="21.20" height="3.10" fill="#2b2b2b"/><rect x="564.60" y="349.90" width="21.20" height="3.10" fill="#2b2b2b"/><rect x="607.00" y="349.90" width="21.20" height="3.10" fill="#2b2b2b"/><rect x="649.40" y="349.90" width="21.20" height="3.10" fill="#2b2b2b"/><rect x="691.80" y="349.90" width="21.20" height="3.10" fill="#2b2b2b"/><defs><linearGradient id="gtop" x1="0" y1="0" x2="1" y2="1"><stop offset="0" stop-color="#a7adb3"/><stop offset="1" stop-color="#8b929b"/></linearGradient><linearGradient id="gleft" x1="0" y1="0" x2="1" y2="0"><stop offset="0" stop-color="#b7bbbe"/><stop offset="1" stop-color="#a5aaaf"/></linearGradient><linearGradient id="gfront" x1="0.3" y1="0" x2="0.6" y2="1"><stop offset="0" stop-color="#e2e2e0"/><stop offset="1" stop-color="#f2f2f0"/></linearGradient><clipPath id="cfront"><polygon points="619.50,211.80 705.80,215.50 647.20,288.40 563.90,313.30" fill="#000" /></clipPath><clipPath id="ctop"><polygon points="619.50,211.80 705.80,215.50 637.30,159.00 555.60,136.80" fill="#000" /></clipPath><clipPath id="cleft"><polygon points="619.50,211.80 555.60,136.80 527.40,225.80 563.90,313.30" fill="#000" /></clipPath></defs><polygon points="619.50,211.80 705.80,215.50 637.30,159.00 555.60,136.80" fill="url(#gtop)" /><polygon points="619.50,211.80 555.60,136.80 527.40,225.80 563.90,313.30" fill="url(#gleft)" /><polygon points="619.50,211.80 705.80,215.50 647.20,288.40 563.90,313.30" fill="url(#gfront)" /><rect x="520" y="130" width="200" height="190" filter="url(#nz1)" opacity="0.10" clip-path="url(#cfront)"/><rect x="520" y="130" width="200" height="190" filter="url(#nz1)" opacity="0.06" clip-path="url(#cleft)"/><line x1="598.26" y1="186.87" x2="684.82" y2="198.20" stroke="#6f747a" stroke-width="0.8"/><line x1="581.23" y1="166.88" x2="666.77" y2="183.31" stroke="#6f747a" stroke-width="0.8"/><line x1="567.26" y1="150.49" x2="651.07" y2="170.36" stroke="#6f747a" stroke-width="0.8"/><line x1="671.57" y1="214.03" x2="649.69" y2="193.60" stroke="#6f747a" stroke-width="0.8"/><line x1="626.65" y1="190.59" x2="608.69" y2="172.15" stroke="#6f747a" stroke-width="0.8"/><line x1="668.77" y1="196.10" x2="650.49" y2="180.18" stroke="#6f747a" stroke-width="0.8"/><line x1="631.40" y1="176.51" x2="615.87" y2="162.01" stroke="#6f747a" stroke-width="0.8"/><line x1="593.67" y1="156.75" x2="580.94" y2="143.69" stroke="#6f747a" stroke-width="0.8"/><line x1="634.77" y1="166.50" x2="621.11" y2="154.60" stroke="#6f747a" stroke-width="0.8"/><line x1="602.11" y1="243.54" x2="547.34" y2="162.88" stroke="#777670" stroke-width="0.8"/><line x1="587.41" y1="270.38" x2="539.97" y2="186.13" stroke="#777670" stroke-width="0.8"/><line x1="574.81" y1="293.38" x2="533.36" y2="206.99" stroke="#777670" stroke-width="0.8"/><line x1="581.17" y1="166.81" x2="569.63" y2="195.70" stroke="#777670" stroke-width="0.8"/><line x1="584.20" y1="217.17" x2="572.15" y2="243.29" stroke="#777670" stroke-width="0.8"/><line x1="557.53" y1="177.89" x2="548.98" y2="202.13" stroke="#777670" stroke-width="0.8"/><line x1="559.56" y1="220.91" x2="550.69" y2="243.10" stroke="#777670" stroke-width="0.8"/><line x1="561.68" y1="266.00" x2="552.48" y2="285.93" stroke="#777670" stroke-width="0.8"/><line x1="541.37" y1="223.68" x2="534.56" y2="242.97" stroke="#777670" stroke-width="0.8"/><line x1="601.72" y1="244.26" x2="688.39" y2="237.16" stroke="#9c978e" stroke-width="0.8"/><line x1="586.96" y1="271.20" x2="673.04" y2="256.26" stroke="#9c978e" stroke-width="0.8"/><line x1="574.53" y1="293.90" x2="659.40" y2="273.22" stroke="#9c978e" stroke-width="0.8"/><line x1="671.72" y1="214.04" x2="653.48" y2="240.02" stroke="#9c978e" stroke-width="0.8"/><line x1="630.39" y1="241.91" x2="614.90" y2="266.35" stroke="#9c978e" stroke-width="0.8"/><line x1="672.48" y1="238.46" x2="656.88" y2="259.06" stroke="#9c978e" stroke-width="0.8"/><line x1="637.79" y1="262.37" x2="624.14" y2="281.81" stroke="#9c978e" stroke-width="0.8"/><line x1="601.63" y1="287.30" x2="590.11" y2="305.46" stroke="#9c978e" stroke-width="0.8"/><line x1="643.14" y1="277.18" x2="630.97" y2="293.25" stroke="#9c978e" stroke-width="0.8"/><line x1="619.5" y1="211.8" x2="563.9" y2="313.3" stroke="#5f6872" stroke-width="1"/><line x1="619.5" y1="211.8" x2="705.8" y2="215.5" stroke="#6e757d" stroke-width="0.8"/><rect x="484" y="91" width="245" height="1" fill="#000"/><rect x="484" y="91" width="1" height="263" fill="#000"/></svg>
<svg class="a" style="left:485px;top:361px" width="17" height="17"><circle cx="8.50" cy="8.50" r="6.1" fill="#f2f2f2" stroke="#7e7e7e" stroke-width="1"/></svg>
<span class="t" style="left:502.14px;top:365.00px;font-size:11.5px;color:#000;letter-spacing:-0.557px;">Sphere</span>
<svg class="a" style="left:566px;top:361px" width="17" height="17"><circle cx="8.50" cy="8.50" r="6.5" fill="#005fb8"/><circle cx="8.50" cy="8.50" r="2.3" fill="#fff"/></svg>
<span class="t" style="left:583.36px;top:365.00px;font-size:11.5px;color:#000;letter-spacing:-0.750px;">Cube</span>
<svg class="a" style="left:648px;top:361px" width="17" height="17"><circle cx="8.40" cy="8.50" r="6.1" fill="#f2f2f2" stroke="#7e7e7e" stroke-width="1"/></svg>
<span class="t" style="left:664.93px;top:365.00px;font-size:11.5px;color:#000;letter-spacing:-0.619px;">None</span>
<div class="btn" style="left:486px;top:393px;width:103px;height:21px"></div>
<span class="t" style="left:520.09px;top:399.00px;font-size:11.5px;color:#000;letter-spacing:-0.184px;">Create</span>
<div class="btn" style="left:486px;top:419px;width:103px;height:21px"></div>
<span class="t" style="left:523.95px;top:425.00px;font-size:11.5px;color:#000;letter-spacing:-0.466px;">Copy</span>
<div class="btn" style="left:486px;top:445px;width:103px;height:21px"></div>
<span class="t" style="left:526.63px;top:451.00px;font-size:11.5px;color:#000;letter-spacing:-0.215px;">Edit</span>
<div class="btn" style="left:486px;top:471px;width:103px;height:21px"></div>
<span class="t" style="left:520.73px;top:477.00px;font-size:11.5px;color:#000;letter-spacing:-0.268px;">Delete</span>
<span class="t" style="left:20.93px;top:532.00px;font-size:11.5px;color:#000;letter-spacing:-0.205px;">Material: Aerated Concrete</span>
<span class="t" style="left:21.14px;top:554.00px;font-size:11.5px;color:#000;letter-spacing:-0.261px;">Search :</span>
<div class="a" style="left:134px;top:549px;width:213px;height:24px;background:#fff;border:1px solid #828282;border-radius:2px"></div>
<svg class="a" style="left:332px;top:556px" width="12" height="10"><path d="M2.1 3.9 L6 7.8 L9.9 3.9" stroke="#4a4a4a" stroke-width="1.2" fill="none"/></svg>
<div class="a" style="left:367px;top:552px;width:13px;height:13px;background:#f6f6f6;border:1px solid #6e6e6e;border-radius:3px"></div>
<span class="t" style="left:381.96px;top:554.00px;font-size:11.5px;color:#000;letter-spacing:-0.354px;">Sort materials by name</span>
<div class="btn" style="left:23px;top:578px;width:223px;height:21px;border-color:#bcc6d2;"></div>
<span class="t" style="left:85.93px;top:584.00px;font-size:11.5px;color:#000;letter-spacing:-0.374px;">Pack Used Textures</span>
<div class="btn" style="left:264px;top:578px;width:223px;height:21px;"></div>
<span class="t" style="left:311.84px;top:584.00px;font-size:11.5px;color:#000;letter-spacing:-0.466px;">Remove Unused Materials</span>
<div class="btn" style="left:504px;top:578px;width:223px;height:21px;"></div>
<span class="t" style="left:570.82px;top:584.00px;font-size:11.5px;color:#000;letter-spacing:-0.451px;">Load From Library</span>
<div class="btn" style="left:595px;top:622px;width:73px;height:21px"></div>
<span class="t" style="left:622.67px;top:628.00px;font-size:11.5px;color:#000;letter-spacing:-0.750px;">OK</span>
<div class="btn" style="left:676px;top:622px;width:73px;height:21px"></div>
<span class="t" style="left:694.95px;top:628.00px;font-size:11.5px;color:#000;letter-spacing:-0.532px;">Cancel</span>
</div></div></body></html>
